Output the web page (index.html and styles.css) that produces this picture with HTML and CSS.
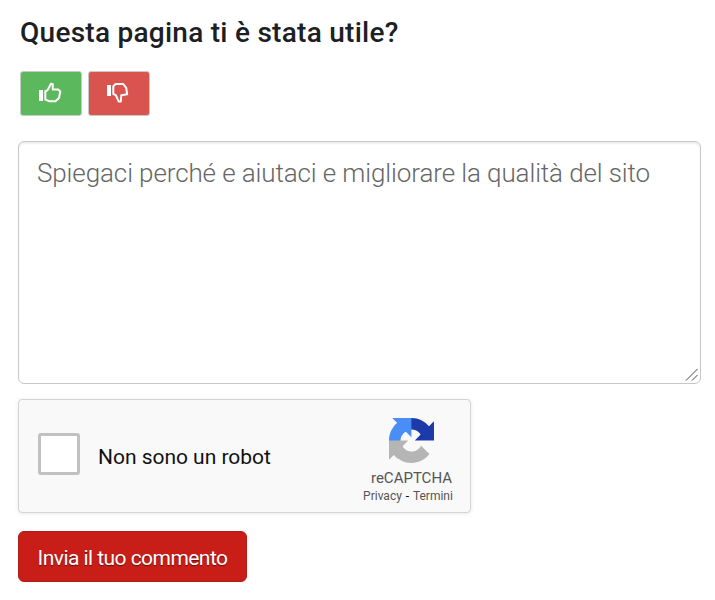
FILE: index.html
```html
<!DOCTYPE html>
<html lang="it">
<head>
<meta charset="utf-8">
<title>Questa pagina ti è stata utile?</title>
<link rel="stylesheet" href="styles.css">
</head>
<body>
<form class="feedback">
  <h1 class="title">Questa pagina ti è stata utile?</h1>
  <div class="votes">
    <button type="button" class="vote vote-up" aria-label="Sì">
      <svg width="24" height="22" viewBox="0 0 24 22"><path class="cuff" d="M1 8h4v11H1z"/><path class="hand" d="M7.3 9.2 9.5 8.3 13 1.8 14.8 2.2 14.7 7.5 20.4 7.6 22.3 9.5 21 16 17.5 19.2H11L7.3 17.5Z"/></svg>
    </button>
    <button type="button" class="vote vote-down" aria-label="No">
      <svg width="24" height="22" viewBox="0 0 24 22"><path class="cuff" d="M1 3h4v11H1z"/><path class="hand" d="M7.3 4.2 9.7 2H17.2L20.2 5.8 21.2 12.3 15.3 13.2 14.8 19.4H12.6L9.8 13.2 7.3 12Z"/></svg>
    </button>
  </div>
  <div class="comment">
    <textarea class="comment-input" placeholder="Spiegaci perché e aiutaci e migliorare la qualità del sito"></textarea>
    <svg class="grip" width="13" height="13" viewBox="0 0 13 13"><path d="M1 12.5 12.5 1M7 12.5 12.5 7"/></svg>
  </div>
  <div class="captcha">
    <span class="checkbox"></span>
    <span class="captcha-label">Non sono un robot</span>
    <div class="brand">
      <svg class="logo" width="45" height="45" viewBox="0 0 64 64">
        <path fill="#1c3aa9" d="M64 31.955l-.033-1.37V4.687l-7.16 7.16C50.948 4.674 42.033.093 32.05.093c-10.4 0-19.622 4.96-25.458 12.64l11.736 11.86a15.55 15.55 0 0 1 4.754-5.334c2.05-1.6 4.952-2.906 8.968-2.906.485 0 .86.057 1.135.163 4.976.393 9.288 3.14 11.828 7.124l-8.307 8.307L64 31.953"/>
        <path fill="#4a8df5" d="M31.862.094l-1.37.033H4.594l7.16 7.16C4.58 13.147 0 22.06 0 32.046c0 10.4 4.96 19.622 12.64 25.458L24.5 45.768a15.55 15.55 0 0 1-5.334-4.754c-1.6-2.05-2.906-4.952-2.906-8.968 0-.485.057-.86.163-1.135.393-4.976 3.14-9.288 7.124-11.828l8.307 8.307L31.86.095"/>
        <path fill="#b5b5b5" d="M.001 32.045l.033 1.37v25.898l7.16-7.16c5.86 7.173 14.774 11.754 24.76 11.754 10.4 0 19.622-4.96 25.458-12.64l-11.736-11.86a15.55 15.55 0 0 1-4.754 5.334c-2.05 1.6-4.952 2.906-8.968 2.906-.485 0-.86-.057-1.135-.163-4.976-.393-9.288-3.14-11.828-7.124l8.307-8.307c-10.522.04-22.4.066-27.295-.005"/>
      </svg>
      <span class="brand-name">reCAPTCHA</span>
      <span class="brand-links">Privacy <b>-</b> Termini</span>
    </div>
  </div>
  <button type="button" class="submit">Invia il tuo commento</button>
</form>
</body>
</html>
```
FILE: styles.css
```css
* { box-sizing: border-box; }
body { margin: 0; background: #fff; color: #1c2024; font-family: Roboto, sans-serif; }
.feedback { display: flex; flex-direction: column; align-items: flex-start; padding: 15px 14px 0 18px; }
.title { margin: 0 0 20px 2px; font-size: 28px; line-height: 36px; font-weight: 500; white-space: nowrap; letter-spacing: 0.26px; }
.votes { display: flex; gap: 6px; margin: 0 0 25px 2px; }
.vote { width: 62px; height: 45px; padding: 0 3px 1px 0; display: flex; align-items: center; justify-content: center; border: 1px solid #c5cbc5; border-radius: 3px; }
.vote-up { background: #5cb85c; }
.vote-down { background: #d9534f; }
.cuff { fill: #fff; }
.hand { fill: none; stroke: #fff; stroke-width: 2; stroke-linejoin: round; }
.comment { position: relative; width: 683px; height: 243px; margin-bottom: 15px; }
.comment-input { display: block; width: 100%; height: 100%; padding: 14px 18px; border: 1px solid #c8c8c8; border-radius: 6px; resize: none; outline: 0; background: #fff; box-shadow: inset 0 2px 2px rgba(0,0,0,.07); font: 300 26px/34px Roboto, sans-serif; letter-spacing: -0.11px; }
.comment-input::placeholder { color: #666; opacity: 1; }
.grip { position: absolute; right: 3px; bottom: 3px; fill: none; stroke: #444; stroke-width: 1; }
.captcha { display: flex; align-items: center; width: 453px; height: 114px; margin-bottom: 18px; padding-left: 19px; border: 1px solid #d3d3d3; border-radius: 4px; background: #f9f9f9; box-shadow: 0 1px 4px rgba(0,0,0,.08); }
.checkbox { width: 42px; height: 42px; margin: -4px 18px 0 0; border: 3px solid #c1c1c1; border-radius: 3px; background: #fff; }
.captcha-label { flex: 1; margin-top: 2px; font-size: 21px; line-height: 24px; letter-spacing: -0.03px; color: #111; }
.brand { width: 92px; margin: 11px 16px 0 0; display: flex; flex-direction: column; align-items: center; color: #555; white-space: nowrap; }
.logo { margin-left: 7px; }
.brand-name { margin: 6px 0 0 7px; font-size: 15px; line-height: 18px; }
.brand-links { font-size: 12px; line-height: 18px; }
.brand-links b { color: #000; margin: 0 1px; font-weight: 400; }
.submit { width: 229px; height: 51px; padding: 3px 0 0; border: 1px solid #b31b17; border-radius: 6px; background: #c91d17; color: #fff; font: 400 21px/26px Roboto, sans-serif; text-shadow: 0 1px 1px rgba(0,0,0,.5); letter-spacing: -.55px; }
```
